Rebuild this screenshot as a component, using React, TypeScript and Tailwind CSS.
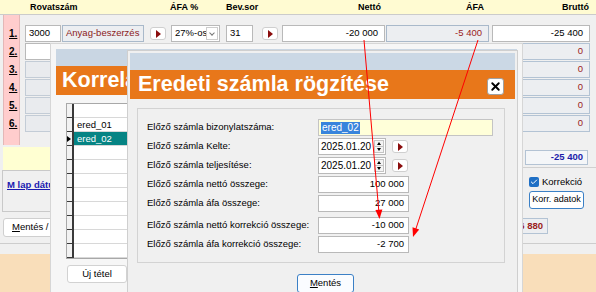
import React from "react";
import { X, Check } from "lucide-react";

function PlayBtn() {
  return (
    <div className="flex h-[13px] w-[16px] items-center justify-center rounded-[3px] border border-[#cfcfcf] bg-white">
      <span className="h-0 w-0 border-y-[4px] border-l-[5px] border-y-transparent border-l-[#8b0d0d]" />
    </div>
  );
}

function DateField({ value }: { value: string }) {
  return (
    <div className="flex items-center">
      <div className="flex h-[17px] w-[68px] items-center border border-[#b9b9b9] bg-white pl-[2px] pr-px">
        <span className="flex-1 text-[10px]">{value}</span>
        <div className="flex h-[13px] w-[10px] flex-col border border-[#c4c4c4] bg-[#f4f4f4]">
          <div className="flex flex-1 items-center justify-center border-b border-[#c4c4c4]">
            <span className="h-0 w-0 border-x-[2.5px] border-b-[3px] border-x-transparent border-b-black" />
          </div>
          <div className="flex flex-1 items-center justify-center">
            <span className="h-0 w-0 border-x-[2.5px] border-t-[3px] border-x-transparent border-t-black" />
          </div>
        </div>
      </div>
      <div className="ml-[6px]">
        <PlayBtn />
      </div>
    </div>
  );
}

function Amount({ value }: { value: string }) {
  return (
    <div className="flex h-[17px] w-[91px] items-center justify-end border border-[#b9b9b9] bg-white pr-[4px]">
      {value}
    </div>
  );
}

export default function App() {
  const korrelRows = ["", "ered_01", "ered_02", "", "", "", "", "", "", "", ""];

  return (
    <div className="relative h-[292px] w-[596px] overflow-hidden whitespace-nowrap bg-[#f0f0f0] font-['Liberation_Sans',Arial,sans-serif] text-[9.5px] text-black">
      {/* fejléc */}
      <div className="flex h-[15px] items-center border-b border-[#cbcbcb] bg-[#fffbd2] text-[9px] font-bold leading-none">
        <div className="w-[30px]" />
        <div className="w-[140px]">Rovatszám</div>
        <div className="w-[56px]">ÁFA %</div>
        <div className="w-[56px]">Bev.sor</div>
        <div className="w-[99px] text-right">Nettó</div>
        <div className="w-[103px] text-right">ÁFA</div>
        <div className="w-[105px] text-right">Bruttó</div>
      </div>

      {/* tételsorok */}
      <div className="flex h-[130px]">
        <div className="ml-[3px] flex w-[17px] flex-col border-x border-[#e3b7b7] bg-[#ffcdcd] pt-[10px] text-[10px] font-bold">
          {["1.", "2.", "3.", "4.", "5.", "6."].map((n) => (
            <div key={n} className="h-[18px] pl-[5px] leading-[18px] underline">
              {n}
            </div>
          ))}
        </div>
        <div className="ml-[5px] flex flex-col gap-px pt-[10px]">
          <div className="flex h-[17px] items-center">
            <div className="flex h-[17px] w-[36px] items-center border border-[#b9b9b9] bg-white pl-[3px]">3000</div>
            <div className="ml-px flex h-[17px] w-[82px] items-center border border-[#a9b9ca] bg-[#eceef1] pl-[3px] text-[#8b1a1a]">
              Anyag-beszerzés
            </div>
            <div className="ml-[6px]">
              <PlayBtn />
            </div>
            <div className="ml-[5px] flex h-[17px] w-[49px] items-center overflow-hidden border border-[#b9b9b9] bg-white pl-[3px] pr-px">
              <span className="flex-1 overflow-hidden">27%-os</span>
              <div className="flex h-[13px] w-[12px] shrink-0 items-center justify-center border border-[#cdcdcd]">
                <span className="h-[4px] w-[4px] -translate-y-px rotate-45 border-b border-r border-[#777]" />
              </div>
            </div>
            <div className="ml-[6px] flex h-[17px] w-[27px] items-center border border-[#b9b9b9] bg-white pl-[3px]">31</div>
            <div className="ml-[9px]">
              <PlayBtn />
            </div>
            <div className="ml-[4px] flex h-[17px] w-[103px] items-center justify-end border border-[#b9b9b9] bg-white pr-[6px]">-20 000</div>
            <div className="ml-px flex h-[17px] w-[103px] items-center justify-end border border-[#a9b9ca] bg-[#eceef1] pr-[6px] text-[#9b1c1c]">
              -5 400
            </div>
            <div className="ml-[3px] flex h-[17px] w-[98px] items-center justify-end border border-[#b9b9b9] bg-white pr-[6px]">-25 400</div>
          </div>
          {[0, 1, 2, 3, 4].map((i) => (
            <div key={i} className="flex h-[17px] w-[565px] items-center justify-between">
              <div
                className={
                  i === 0
                    ? "h-[17px] w-[36px] border border-[#b9b9b9] bg-white"
                    : "h-[17px] w-[36px] border border-[#c3ccd6] bg-[#e9ebee]"
                }
              />
              <div className="flex h-[17px] w-[98px] items-center justify-end border border-[#b3c3d4] bg-[#eceef1] pr-[6px] text-[#9b1c1c]">
                0
              </div>
            </div>
          ))}
        </div>
      </div>

      {/* összesítő és gombok */}
      <div className="flex h-[99px] justify-between border-b border-[#cdcdcd]">
        <div className="flex w-[80px] flex-col">
          <div className="ml-[3px] mt-[2px] h-[23px] bg-[#ffffd2]" />
          <div className="ml-[2px] h-[42px] border border-[#c9c9c9] pl-[4px] pt-[7px] font-bold text-[#1a1ab0] underline">
            M lap dátuma
          </div>
          <div className="ml-[3px] mt-[6px] flex h-[19px] items-center rounded-[3px] border border-[#cfcfcf] bg-white pl-[8px]">
            <span className="underline">M</span>entés / Kilépés
          </div>
        </div>
        <div className="flex w-[104px] flex-col">
          <div className="ml-[33px] mt-[5px] flex h-[15px] w-[63px] items-center justify-end border border-[#b3c3d4] bg-[#f4f6f8] pr-[4px] font-bold text-[#1c1caa]">
            -25 400
          </div>
          <div className="mt-[2px] h-px bg-[#d0d0d0]" />
          <div className="ml-[37px] mt-[9px] flex h-[10px] items-center gap-[3px]">
            <div className="flex h-[10px] w-[10px] items-center justify-center rounded-[2px] bg-[#1f6fc5]">
              <Check size={8} strokeWidth={3} color="white" />
            </div>
            <span>Korrekció</span>
          </div>
          <div className="ml-[37px] mt-[4px] flex h-[18px] w-[55px] items-center justify-center rounded-[3px] border border-[#3b80c6] bg-white text-[9px]">
            Korr. adatok
          </div>
          <div className="mt-[9px] flex h-[16px] w-[56px] items-center justify-end border border-[#b3c3d4] bg-[#eceef1] pr-[4px] font-bold text-[#9b1c1c]">
            -36 880
          </div>
        </div>
      </div>
      <div className="h-[10px]" />
      <div className="h-[38px] bg-[#f9deba]" />

      {/* Korrekciós ablak */}
      <div className="absolute left-[50px] top-[43px] flex h-[260px] w-[473px] flex-col border border-[#d6d6d6] bg-[#f6f6f6] px-[5px] pt-[5px]">
        <div className="h-[17px] bg-[#c9d6e3]" />
        <div className="h-[29px] bg-[#e8771a] pl-[6px] text-[21.5px] font-bold leading-[29px] text-white">
          <div className="w-[70px] overflow-hidden">Korrelációs adatok</div>
        </div>
        <div className="ml-[10px] mt-[8px] w-[90px] border border-[#a8a8a8] bg-white">
          {korrelRows.map((r, i) => (
            <div key={i} className="flex h-[14px]">
              <div className="flex w-[7px] items-center border-b border-r-2 border-[#3a3a3a] bg-[#f2f2f2]">
                {i === 2 && (
                  <span className="h-0 w-0 border-y-[3px] border-l-[4px] border-y-transparent border-l-black" />
                )}
              </div>
              <div
                className={
                  i === 2
                    ? "flex-1 border-b border-[#d8d8d8] bg-[#068484] pl-[3px] leading-[13px] text-white"
                    : "flex-1 border-b border-[#d8d8d8] pl-[3px] leading-[13px]"
                }
              >
                {r}
              </div>
            </div>
          ))}
        </div>
        <div className="ml-[11px] mt-[6px] flex h-[18px] w-[60px] items-center justify-center rounded-[3px] border border-[#d2d2d2] bg-white">
          Új tétel
        </div>
      </div>

      {/* Eredeti számla ablak */}
      <div className="absolute left-[127px] top-[50px] flex h-[250px] w-[391px] flex-col border border-[#cfcfcf] bg-[#f0f0f0] px-[2px] pt-[2px]">
        <div className="h-[17px] bg-[#cbd8e5]" />
        <div className="flex h-[29px] justify-between bg-[#e8771a] pl-[8px] pr-[11px]">
          <span className="text-[21.5px] font-bold leading-[29px] text-white">Eredeti számla rögzítése</span>
          <div className="mt-[8px] flex h-[17px] w-[17px] items-center justify-center rounded-[3px] border border-[#a0a0a0] bg-white">
            <X size={13} strokeWidth={3.5} color="black" />
          </div>
        </div>
        <div className="ml-[7px] mt-[9px] h-[155px] w-[368px] border border-[#d3d3d3] pl-[9px] pt-[9px]">
          <div className="flex h-[19px] items-center">
            <span className="w-[171px]">Előző számla bizonylatszáma:</span>
            <div className="flex h-[17px] w-[175px] items-center border border-[#c4c4c4] bg-[#ffffd9] pl-[2px]">
              <span className="bg-[#3884dc] px-px text-[10px] leading-[12px] text-white">ered_02</span>
            </div>
          </div>
          <div className="flex h-[19px] items-center">
            <span className="w-[171px]">Előző számla Kelte:</span>
            <DateField value="2025.01.20" />
          </div>
          <div className="flex h-[19px] items-center">
            <span className="w-[171px]">Előző számla teljesítése:</span>
            <DateField value="2025.01.20" />
          </div>
          <div className="flex h-[19px] items-center">
            <span className="w-[171px]">Előző számla nettó összege:</span>
            <Amount value="100 000" />
          </div>
          <div className="flex h-[19px] items-center">
            <span className="w-[171px]">Előző számla áfa összege:</span>
            <Amount value="27 000" />
          </div>
          <div className="mt-[3px] flex h-[19px] items-center">
            <span className="w-[171px]">Előző számla nettó korrekció összege:</span>
            <Amount value="-10 000" />
          </div>
          <div className="flex h-[19px] items-center">
            <span className="w-[171px]">Előző számla áfa korrekció összege:</span>
            <Amount value="-2 700" />
          </div>
        </div>
        <div className="ml-[167px] mt-[11px] flex h-[19px] w-[57px] items-center justify-center rounded-[3px] border border-[#3b80c6] bg-[#fafcff]">
          <span className="underline">M</span>entés
        </div>
      </div>

      {/* piros nyilak */}
      <svg className="pointer-events-none absolute left-0 top-0" width="596" height="292" viewBox="0 0 596 292">
        <line x1="364" y1="40" x2="378.8" y2="211" stroke="#ff0000" strokeWidth="1" />
        <polygon points="379.5,219 382.4,209.5 375.4,210.1" fill="#ff0000" />
        <line x1="478" y1="40" x2="415.5" y2="230" stroke="#ff0000" strokeWidth="1" />
        <polygon points="413,237 419.2,229.5 412.5,227.3" fill="#ff0000" />
      </svg>
    </div>
  );
}
